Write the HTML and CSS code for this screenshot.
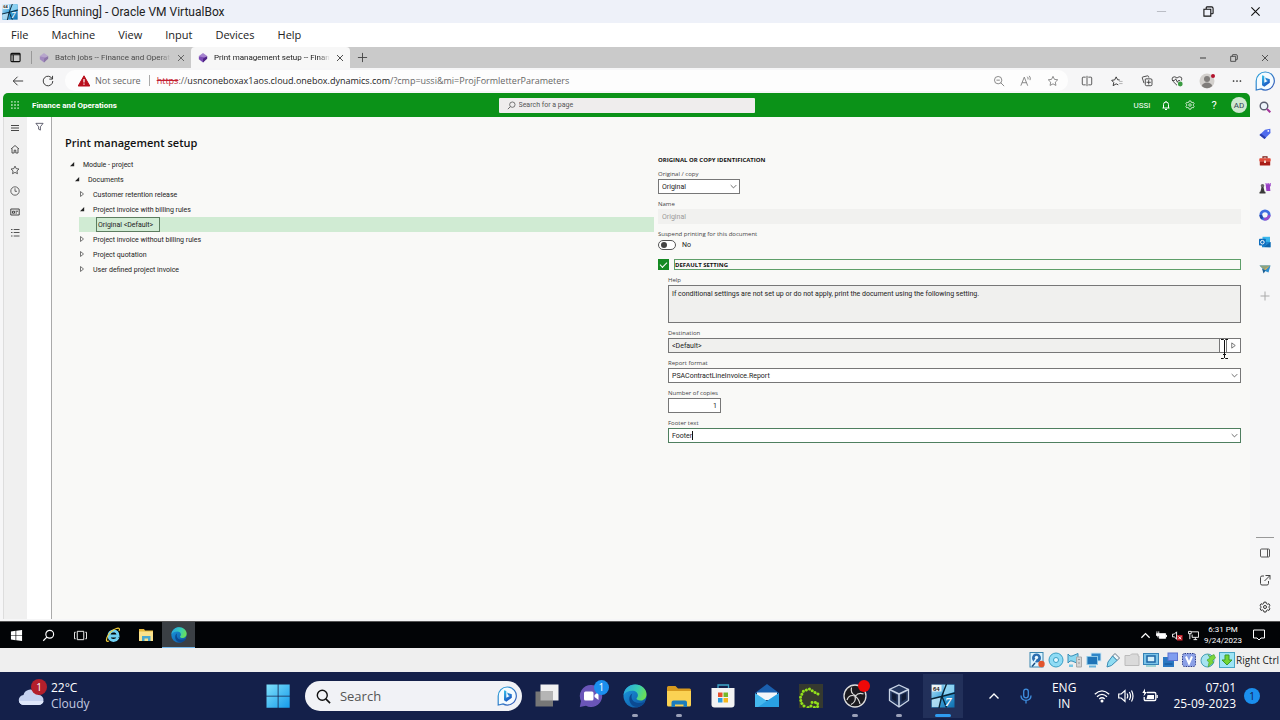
FILE: index.html
```html
<!DOCTYPE html>
<html lang="en">
<head>
<meta charset="utf-8">
<meta name="viewport" content="width=device-width, initial-scale=1">
<title>D365 [Running] - Oracle VM VirtualBox</title>
<link rel="stylesheet" href="styles.css">
</head>
<body>
<svg class="defs" aria-hidden="true">
  <defs>
    <linearGradient id="g-bing" x1="0" y1="0" x2="0.6" y2="1"><stop offset="0" stop-color="#38c3ea"/><stop offset="1" stop-color="#174fc0"/></linearGradient>
    <linearGradient id="g-ring" x1="0" y1="0" x2="1" y2="1"><stop offset="0" stop-color="#2aa5dd"/><stop offset="1" stop-color="#3a57b5"/></linearGradient>
    <linearGradient id="g-edge-top" x1="0" y1="0.3" x2="1" y2="0.6"><stop offset="0" stop-color="#2ba7e0"/><stop offset="0.55" stop-color="#38cdb4"/><stop offset="1" stop-color="#6fe04f"/></linearGradient>
    <linearGradient id="g-edge-low" x1="0" y1="0" x2="1" y2="1"><stop offset="0" stop-color="#1b9de2"/><stop offset="1" stop-color="#0d4f9e"/></linearGradient>
    <linearGradient id="g-win" x1="0" y1="0" x2="1" y2="1"><stop offset="0" stop-color="#7fe0fb"/><stop offset="1" stop-color="#159bea"/></linearGradient>
    <linearGradient id="g-glass" x1="0" y1="0" x2="1" y2="1"><stop offset="0" stop-color="#bfe6f8"/><stop offset="0.5" stop-color="#3da4dc"/><stop offset="1" stop-color="#0f6fae"/></linearGradient>
    <symbol id="i-close" viewBox="0 0 12 12"><path d="M1.5 1.5l9 9M10.5 1.5l-9 9" fill="none" stroke="currentColor" stroke-width="1.2"/></symbol>
    <symbol id="i-search" viewBox="0 0 16 16"><circle cx="9.5" cy="6.5" r="4.8" fill="none" stroke="currentColor" stroke-width="1.4"/><path d="M6 10L1.5 14.5" stroke="currentColor" stroke-width="1.5"/></symbol>
    <symbol id="i-restore" viewBox="0 0 12 12"><path d="M1 3.5h7.5V11H1zM3.5 3.5V1.8q0-.8.8-.8h5q1.7 0 1.7 1.7v5q0 .8-.8.8H8.5" fill="none" stroke="currentColor" stroke-width="1.2"/></symbol>
    <symbol id="i-chev" viewBox="0 0 10 10"><path d="M1 3l4 4 4-4" fill="none" stroke="currentColor" stroke-width="1.1"/></symbol>
    <symbol id="i-chev-up" viewBox="0 0 12 12"><path d="M1.5 8.5L6 4l4.5 4.5" fill="none" stroke="currentColor" stroke-width="1.4"/></symbol>
    <symbol id="i-open" viewBox="0 0 8 8"><path d="M6.2 2v4.2H2z" fill="#222"/></symbol>
    <symbol id="i-shut" viewBox="0 0 8 8"><path d="M2.500 1.500L5.500 4 2.500 6.500z" fill="none" stroke="#666" stroke-width=".9"/></symbol>
    <symbol id="i-star" viewBox="0 0 16 16"><path d="M8 1.800l1.900 4 4.400.6-3.200 3.100.8 4.400L8 11.800l-3.900 2.100.8-4.400L1.700 6.400l4.400-.6z" fill="none" stroke="currentColor" stroke-width="1.100"/></symbol>
    <symbol id="i-gear" viewBox="0 0 16 16"><path d="M6.600 1.500h2.800l.5 2 1.400.8 2-.6 1.400 2.400-1.500 1.400v1.200l1.500 1.400-1.400 2.400-2-.6-1.400.8-.5 2H6.600l-.5-2-1.400-.8-2 .6-1.400-2.400 1.500-1.400V7.500L1.300 6.100l1.400-2.400 2 .6 1.400-.8z" fill="none" stroke="currentColor" stroke-width="1.200"/><circle cx="8" cy="8" r="2" fill="none" stroke="currentColor" stroke-width="1.200"/></symbol>
    <symbol id="i-bing" viewBox="0 0 20 20"><path d="M10.300 1a9 9 0 1 1-4.300 16.900L1.200 19V10A9 9 0 0 1 10.300 1z" fill="#f4fbff" stroke="url(#g-ring)" stroke-width="1.200"/><path d="M7 4.200l2.300.9v6.700l3.500-1.700-1.700-.9-1.100-2.700 4.800 1.800v3.500L9.300 15.800 7 14.300z" fill="url(#g-bing)"/></symbol>
    <symbol id="i-edge" viewBox="0 0 24 24"><circle cx="12" cy="12" r="11.500" fill="url(#g-edge-low)"/><path d="M.6 11C1.500 4.500 6.500.5 12.300.5c6.500 0 11.200 4.800 11.200 9.700 0 4-2.900 6.300-6 6.300-2.700 0-4-1.200-4-2 0-.6 1.400-1.300 1.400-3.300 0-2.400-2.400-4.400-5.600-4.400C5.200 6.800 2 8.600.6 11z" fill="url(#g-edge-top)"/><path d="M9.300 9.500c-2 1.200-3 3.200-3 5.500 0 4 3.300 8.400 8.700 8 3-.7 5.200-2.300 6.700-4.300.5-.7 0-1-.6-.7-4.600 2.400-11.800.6-12.500-4.300-.2-1.600.1-3 .7-4.200z" fill="#0b4a92"/></symbol>
    <symbol id="i-dyn" viewBox="0 0 12 12"><path d="M6 0l5 3.500L6 7 1 3.500z" fill="#a583cf"/><path d="M6 5l5 0-5 6.500L1 7.500V4z" fill="#7b4bb5"/><path d="M6 7l5-3.500V7l-5 4.500z" fill="#4f2485"/></symbol>
    <symbol id="i-vm" viewBox="0 0 24 24"><rect x=".5" y=".5" width="23" height="23" fill="url(#g-glass)"/><path d="M1 15l9-2-1 10H1z" fill="#d5f0fb" opacity=".7"/><path d="M13 1h10v7l-10 3z" fill="#9edcf6" opacity=".8"/><path d="M15.500 0L10.500 13 8 24M0 15l10.500-2.500L24 9M11 12.500l4.500 11" stroke="#0a2436" stroke-width="1.400" fill="none"/><rect x="1" y="1" width="9.500" height="6.500" fill="#eef4f6"/><text x="2" y="6.500" font-size="6" font-weight="700" fill="#222" font-family="Liberation Sans">64</text><text x="14" y="21.500" font-size="13" font-style="italic" font-weight="700" fill="#fff" font-family="Liberation Serif">7</text></symbol>
    <symbol id="i-folder" viewBox="0 0 24 24"><path d="M0 3.500Q0 2 1.500 2H8.500l2.500 2.500H22.500q1.500 0 1.500 1.500v3H0z" fill="#d79a1f"/><path d="M0 7h24v14q0 1.500-1.500 1.500H1.500Q0 22.500 0 21z" fill="#fbd253"/><path d="M4.500 23v-4.500q0-2 2-2h11.500q2 0 2 2v4.500h-3.500v-2.500h-8.500V23z" fill="#1d7dbd"/></symbol>
  </defs>
</svg>

<div class="screen">
  <header class="titlebar">
    <svg class="vm-icon"><use href="#i-vm"/></svg>
    <h1>D365 [Running] - Oracle VM VirtualBox</h1>
    <div class="win-ctl">
      <button class="dim" aria-label="Minimize"><svg viewBox="0 0 12 12"><path d="M1 6h10" stroke="currentColor"/></svg></button>
      <button aria-label="Restore"><svg><use href="#i-restore"/></svg></button>
      <button aria-label="Close"><svg><use href="#i-close"/></svg></button>
    </div>
  </header>
  <nav class="menubar">
    <button>File</button><button>Machine</button><button>View</button><button>Input</button><button>Devices</button><button>Help</button>
  </nav>

  <section class="guest">
    <div class="tabstrip">
      <button class="tab-menu" aria-label="Tab actions"><svg viewBox="0 0 12 12"><rect x="1" y="1.500" width="10" height="9" rx="1" fill="none" stroke="#111" stroke-width="1.200"/><path d="M1 3h10M3.500 3v8" stroke="#111" stroke-width="1.200"/></svg></button>
      <div class="tab">
        <svg class="fav"><use href="#i-dyn"/></svg><span>Batch jobs -- Finance and Operat</span><button aria-label="Close tab"><svg><use href="#i-close"/></svg></button>
      </div>
      <div class="tab active">
        <svg class="fav"><use href="#i-dyn"/></svg><span>Print management setup -- Finan</span><button aria-label="Close tab"><svg><use href="#i-close"/></svg></button>
      </div>
      <button class="new-tab" aria-label="New tab"><svg viewBox="0 0 12 12"><path d="M6 1v10M1 6h10" stroke="#444"/></svg></button>
      <div class="win-ctl small">
        <button aria-label="Minimize"><svg viewBox="0 0 12 12"><path d="M1.500 6h9" stroke="currentColor" stroke-width="1.400"/></svg></button>
        <button aria-label="Restore"><svg><use href="#i-restore"/></svg></button>
        <button aria-label="Close"><svg><use href="#i-close"/></svg></button>
      </div>
    </div>

    <div class="browser">
      <div class="viewport">
        <div class="toolbar">
          <button aria-label="Back"><svg viewBox="0 0 14 14"><path d="M13 7H1.500M6.500 2l-5 5 5 5" fill="none" stroke="#333" stroke-width="1.100"/></svg></button>
          <button aria-label="Refresh"><svg viewBox="0 0 14 14"><path d="M12 4.500A5.600 5.600 0 1 0 12.600 7M12.300 1v3.800H8.500" fill="none" stroke="#333" stroke-width="1.100"/></svg></button>
          <div class="address">
            <svg class="warn" viewBox="0 0 12 12"><path d="M6 .8L11.800 11H.2z" fill="#b90f1c" stroke="#b90f1c" stroke-linejoin="round"/><path d="M6 4v3.500M6 8.500v1.300" stroke="#fff" stroke-width="1.200"/></svg>
            <span class="insecure">Not secure</span>
            <a class="url" href="#"><s>https</s><i>://</i>usnconeboxax1aos.cloud.onebox.dynamics.com<i>/?cmp=ussi&amp;mi=ProjFormletterParameters</i></a>
            <button aria-label="Zoom out"><svg viewBox="0 0 14 14"><circle cx="6" cy="6" r="4.300" fill="none" stroke="#777"/><path d="M9 9l4 4M4 6h4" stroke="#777"/></svg></button>
            <button aria-label="Read aloud"><svg viewBox="0 0 14 14"><path d="M1 12.500L5 2.500l4 10M2.500 9h5M8.500 2q1.500 1.300.8 3.200M10.800 1q2 2.300.9 5" fill="none" stroke="#777"/></svg></button>
            <button class="grey" aria-label="Add to favorites"><svg><use href="#i-star"/></svg></button>
          </div>
          <button aria-label="Split screen"><svg viewBox="0 0 14 14"><path d="M5.500 2.500H2.500q-1 0-1 1v7q0 1 1 1h3M8.500 2.500h3q1 0 1 1v7q0 1-1 1h-3M7 1v12" fill="none" stroke="#444"/></svg></button>
          <button aria-label="Favorites"><svg viewBox="0 0 14 14"><path d="M8.500 11.500L6 10.300 2.500 12.500 3.200 8.800.8 6.200l3.500-.5L6 2.200l1.700 3.300 2.500.4" fill="none" stroke="#333" stroke-width="1.100"/><path d="M9.500 7.500h4M9.500 10h4" stroke="#aaa"/></svg></button>
          <button aria-label="Collections"><svg viewBox="0 0 14 14"><path d="M3.500 9.500L1.500 3.500q-.3-1 .6-1.200L7.500 1q1-.2 1.300.7l.3 1.300M5.500 4.500h6q1.300 0 1.300 1.300v5.400q0 1.300-1.300 1.300h-5q-1.500 0-1.500-1.500V4.500M9 6v5M6.500 8.500h5" fill="none" stroke="#333"/></svg></button>
          <button aria-label="Browser essentials"><svg viewBox="0 0 14 14"><path d="M7 12L2 7Q.5 4.500 2 2.700 4.500 1 7 3.500 9.500 1 12 2.700 13.300 4.500 12 6.500M1.500 6.500H4l1.500-2 2 4L8.500 6.500h2" fill="none" stroke="#333"/><circle cx="10.800" cy="10.500" r="2.800" fill="#3a9a42"/></svg></button>
          <button aria-label="Profile"><svg class="big" viewBox="0 0 16 16"><circle cx="8" cy="8" r="7.500" fill="#d3d0cd"/><circle cx="8" cy="6" r="3" fill="#807d7b"/><path d="M2.700 13Q4 9.500 8 9.500t5.300 3.500Q8 17.500 2.700 13z" fill="#807d7b"/><circle cx="14" cy="3" r="2" fill="#b3122c"/></svg></button>
          <button aria-label="Settings and more"><svg viewBox="0 0 14 14"><circle cx="3" cy="7" r="1" fill="#222"/><circle cx="7" cy="7" r="1" fill="#222"/><circle cx="11" cy="7" r="1" fill="#222"/></svg></button>
        </div>

        <div class="app">
          <header class="appbar">
            <div class="brand">
              <button aria-label="App launcher"><svg viewBox="0 0 9 9" fill="#e4f6e4"><path d="M.2.2h1.600v1.600H.2zM3.700.2h1.600v1.600H3.700zM7.200.2h1.600v1.600H7.200zM.2 3.700h1.600v1.600H.2zM3.700 3.700h1.600v1.600H3.700zM7.200 3.700h1.600v1.600H7.200zM.2 7.200h1.600v1.600H.2zM3.700 7.200h1.600v1.600H3.700zM7.200 7.200h1.600v1.600H7.200z"/></svg></button>
              <strong>Finance and Operations</strong>
            </div>
            <label class="find"><svg><use href="#i-search"/></svg><input type="search" placeholder="Search for a page" aria-label="Search for a page"></label>
            <div class="app-tools">
              <button>USSI</button>
              <button aria-label="Notifications"><svg viewBox="0 0 10 10"><path d="M1.500 8h7M2.500 8V4.500Q2.500 2 5 2t2.500 2.500V8M4 9.500h2M5 1v1" fill="none" stroke="#fff"/></svg></button>
              <button aria-label="Settings"><svg><use href="#i-gear"/></svg></button>
              <button class="help" aria-label="Help">?</button>
              <button class="avatar">AD</button>
            </div>
          </header>
          <div class="app-body">
            <nav class="rail">
              <button aria-label="Expand"><svg viewBox="0 0 10 10"><path d="M1 2.500h8M1 5h8M1 7.500h8" stroke="#333" stroke-width=".9"/></svg></button>
              <button aria-label="Home"><svg viewBox="0 0 10 10"><path d="M1 5l4-3.500L9 5M2 4.500V9h2.200V6.200h1.600V9H8V4.500" fill="none" stroke="#444" stroke-width=".9"/></svg></button>
              <button aria-label="Favorites"><svg><use href="#i-star"/></svg></button>
              <button aria-label="Recent"><svg viewBox="0 0 10 10"><circle cx="5" cy="5" r="4.200" fill="none" stroke="#444" stroke-width=".8"/><path d="M5 2.300V5.300h2" fill="none" stroke="#444" stroke-width=".8"/></svg></button>
              <button aria-label="Workspaces"><svg viewBox="0 0 10 10"><path d="M.8 2h8.400v6H.8z" fill="none" stroke="#444"/><path d="M2.500 4.200h2v2h-2zM5.500 4.200h2.500M5.500 6H7" fill="none" stroke="#333" stroke-width=".9"/></svg></button>
              <button aria-label="Modules"><svg viewBox="0 0 10 10"><path d="M1 1.500h1.500M1 4.500h1.500M1 8h1.500M3.700 1.500H9.500M3.700 4.500H9.500M3.700 8H9.500" stroke="#555" stroke-width="1"/></svg></button>
            </nav>
            <aside class="filter"><button aria-label="Show filters"><svg viewBox="0 0 10 10"><path d="M1 1.500h8L6 5.300V9L4 8V5.300z" fill="none" stroke="#445" stroke-width=".9"/></svg></button></aside>
            <main class="page">
              <section class="tree-col">
                <h2>Print management setup</h2>
                <ul class="tree" role="tree">
                  <li role="treeitem"><div class="node l1"><svg><use href="#i-open"/></svg>Module - project</div></li>
                  <li role="treeitem"><div class="node l2"><svg><use href="#i-open"/></svg>Documents</div></li>
                  <li role="treeitem"><div class="node l3"><svg><use href="#i-shut"/></svg>Customer retention release</div></li>
                  <li role="treeitem"><div class="node l3"><svg><use href="#i-open"/></svg>Project invoice with billing rules</div></li>
                  <li role="treeitem" aria-selected="true"><div class="node l4"><span>Original &lt;Default&gt;</span></div></li>
                  <li role="treeitem"><div class="node l3"><svg><use href="#i-shut"/></svg>Project invoice without billing rules</div></li>
                  <li role="treeitem"><div class="node l3"><svg><use href="#i-shut"/></svg>Project quotation</div></li>
                  <li role="treeitem"><div class="node l3"><svg><use href="#i-shut"/></svg>User defined project invoice</div></li>
                </ul>
              </section>
              <form class="form-col">
                <h3>ORIGINAL OR COPY IDENTIFICATION</h3>
                <div class="field narrow"><label for="kind">Original / copy</label><div class="box"><select id="kind"><option>Original</option></select><svg><use href="#i-chev"/></svg></div></div>
                <div class="field"><label for="name">Name</label><div class="box off"><input id="name" type="text" value="Original" disabled></div></div>
                <div class="field"><label for="suspend">Suspend printing for this document</label><div class="switch"><input id="suspend" type="checkbox" role="switch"><span>No</span></div></div>
                <div class="section-check"><input id="default" type="checkbox" checked><label for="default">DEFAULT SETTING</label></div>
                <div class="nested">
                  <div class="field"><label for="help">Help</label><textarea id="help" readonly>If conditional settings are not set up or do not apply, print the document using the following setting.</textarea></div>
                  <div class="field"><label for="dest">Destination</label>
                    <div class="box read"><input id="dest" type="text" value="&lt;Default&gt;" readonly><button class="slot" type="button" aria-label="Lookup"></button><button class="go" type="button" aria-label="Open menu"><svg viewBox="0 0 8 8"><path d="M2 1l4 3-4 3z" fill="none" stroke="#555" stroke-width=".9"/></svg></button>
                      <svg class="ibeam" viewBox="0 0 9 22"><path d="M1 1.500h2.500l1 1 1-1H8M1 20.500h2.500l1-1 1 1H8M4.500 2v18M3 16.500h3" fill="none" stroke="#111"/></svg>
                    </div>
                  </div>
                  <div class="field"><label for="report">Report format</label><div class="box"><select id="report"><option>PSAContractLineInvoice.Report</option></select><svg><use href="#i-chev"/></svg></div></div>
                  <div class="field copies"><label for="copies">Number of copies</label><div class="box"><input id="copies" type="text" inputmode="numeric" value="1"></div></div>
                  <div class="field"><label for="footer">Footer text</label><div class="box focus"><input id="footer" type="text" value="Footer"><span class="caret"></span><svg><use href="#i-chev"/></svg></div></div>
                </div>
              </form>
            </main>
          </div>
        </div>
      </div>

      <aside class="edgebar">
        <button class="bing" aria-label="Bing chat"><svg><use href="#i-bing"/></svg></button>
        <button aria-label="Search"><svg viewBox="0 0 12 12"><circle cx="5" cy="5" r="3.800" fill="#eef5fb" stroke="#5b5f70" stroke-width="1.400"/><path d="M8 8l3.300 3.300" stroke="#a5359a" stroke-width="2"/></svg></button>
        <button aria-label="Shopping"><svg viewBox="0 0 12 12"><path d="M.5 7L6 1.800 11.300.8 11.500 5 5.500 11z" fill="#4f6bed"/><path d="M.5 7L2 5.600l5 4-1.500 1.400z" fill="#2c3fae"/><circle cx="9.300" cy="2.900" r=".9" fill="#fff"/></svg></button>
        <button aria-label="Tools"><svg viewBox="0 0 12 12"><path d="M4 3.500V1.800h4v1.700" fill="none" stroke="#7c1d16" stroke-width="1.200"/><rect x=".3" y="3.300" width="11.400" height="3.500" rx=".8" fill="#e04a3a"/><rect x=".8" y="6.500" width="10.400" height="4" rx=".5" fill="#a91d17"/><path d="M5 5.500h2V8H5z" fill="#f3d6c8"/></svg></button>
        <button aria-label="Games"><svg viewBox="0 0 12 12"><path d="M6.500 1h1v1.300h1V1h1.200v1.300h1V1h1v3l-.8.800.5 4.200h-4z" fill="#9a3fc6"/><circle cx="3.500" cy="3.800" r="1.800" fill="#666"/><path d="M2.500 5h2l1 4.500 1 .5v1.500h-6V10l1-.5z" fill="#3a3a3a"/></svg></button>
        <button aria-label="Microsoft 365"><svg viewBox="0 0 12 12"><circle cx="6" cy="6" r="4.200" fill="none" stroke="#3f6ee0" stroke-width="2.800"/><path d="M10.200 6A4.200 4.200 0 0 1 5 10" fill="none" stroke="#9a4bcc" stroke-width="2.800"/><path d="M3.500 9.400A4.200 4.200 0 0 1 1.800 6" fill="none" stroke="#2348a8" stroke-width="2.800"/></svg></button>
        <button aria-label="Outlook"><svg viewBox="0 0 12 12"><rect x="3.500" y=".8" width="7.500" height="6" fill="#39b6ec"/><path d="M3 5.500l8.500.5v5.200H3z" fill="#1e86d0"/><path d="M11.500 6v5.200L5 11z" fill="#0f65ad"/><rect x="0" y="2.800" width="6.800" height="6.800" rx=".8" fill="#0d6cbd"/><circle cx="3.400" cy="6.200" r="1.800" fill="none" stroke="#fff" stroke-width="1"/></svg></button>
        <button aria-label="Drop"><svg viewBox="0 0 12 12"><path d="M.5 2.500h11L9.500 9.500 6 8z" fill="#2f8fd0"/><path d="M.5 2.500h11L5 6.500z" fill="#8fa37c"/><path d="M3 5.500l1.500 5 2.200-3z" fill="#1b5e93"/><path d="M5 6.200l6-3.500L6.500 7z" fill="#efb14a"/></svg></button>
        <button aria-label="Customize"><svg viewBox="0 0 12 12"><path d="M6 1.500v9M1.500 6h9" stroke="#aaa"/></svg></button>
        <div class="edge-foot">
          <button aria-label="Hide sidebar"><svg viewBox="0 0 12 12"><rect x="1.500" y="2" width="9" height="8" rx="1" fill="none" stroke="#555"/><path d="M8.500 2v8" stroke="#555"/></svg></button>
          <button aria-label="Open in window"><svg viewBox="0 0 12 12"><path d="M5 2H3Q1.500 2 1.500 3.500v6Q1.500 11 3 11h5q1.500 0 1.500-1.500V7M6.500 1.500H11v4M11 1.500L5.500 7" fill="none" stroke="#444"/></svg></button>
          <button aria-label="Settings"><svg><use href="#i-gear"/></svg></button>
        </div>
      </aside>
    </div>
  </section>

  <footer class="guestbar">
    <div class="apps">
      <button aria-label="Start"><svg viewBox="0 0 14 14"><path d="M1 2.700l5-.7v4.700H1zM6.700 1.900L13 1v5.700H6.700zM1 7.400h5v4.700l-5-.7zM6.700 7.400H13V13l-6.300-.9z" fill="#fff"/></svg></button>
      <button aria-label="Search"><svg><use href="#i-search"/></svg></button>
      <button aria-label="Task view"><svg viewBox="0 0 14 14"><path d="M3.500 2.500h7v9h-7zM1.800 3.500H.5v7h1.300M12.200 3.500h1.300v7h-1.300" fill="none" stroke="#fff"/></svg></button>
      <button class="color" aria-label="Internet Explorer"><svg viewBox="0 0 16 16"><path d="M13 10.700Q11.500 13.500 8.500 13.500 4 13 4 8.700t4.500-4.900q4.500.2 4.600 5.200H5" fill="none" stroke="#6fd0f3" stroke-width="2.800"/><path d="M14 4Q15.500.5 12 1.300 5 3.500 2 10.500.3 15.500 4 14" fill="none" stroke="#f2cf3a" stroke-width="1.200"/></svg></button>
      <button class="color" aria-label="File Explorer"><svg viewBox="0 0 16 16"><path d="M1 2h5l1 1.500h8V14H1z" fill="#e8b93c"/><path d="M1 4.500h14V14H1z" fill="#fbe28b"/><path d="M4 14V9h8.500v5h-2.500v-2.500H6.500V14z" fill="#4aa8cf"/></svg></button>
      <button class="color on" aria-label="Edge"><svg><use href="#i-edge"/></svg></button>
    </div>
    <div class="tray">
      <svg><use href="#i-chev-up"/></svg>
      <svg viewBox="0 0 12 12"><path d="M3.500 4h7v5h-7z" fill="#fff" stroke="#fff"/><path d="M11 5.500h1v2h-1z" fill="#fff"/><path d="M1 1.500v2.500M3 1.500v2.500M.5 4h3v2h-3zM2 6v2" stroke="#fff" fill="#fff"/></svg>
      <svg viewBox="0 0 12 12"><path d="M.5 4.500H2.500L5 2v8L2.500 7.500h-2z" fill="none" stroke="#fff"/><rect x="5.500" y="5.500" width="6" height="6" fill="#c9202a"/><path d="M7 7l3 3M10 7l-3 3" stroke="#fff"/></svg>
      <svg viewBox="0 0 12 12"><path d="M3.500 2h8v6h-7V5M6 10.500h4M8 8v2.500M.5 1.500h3v2.500h-3zM2 4v6" fill="none" stroke="#fff"/></svg>
      <time>6:31 PM<br>9/24/2023</time>
      <svg class="note" viewBox="0 0 14 14"><path d="M1.500 2h11v8H9l-2 2-2-2H1.500z" fill="none" stroke="#fff"/></svg>
    </div>
  </footer>

  <div class="vmstatus">
    <svg viewBox="0 0 16 16"><rect x="1" y=".5" width="13" height="14.500" fill="#d9f3ff" stroke="#3a86b0"/><circle cx="7.500" cy="6" r="4.500" fill="#2b6eb0"/><circle cx="7.500" cy="5.500" r="1.700" fill="#eaf9ff"/><path d="M3 13l4-6" stroke="#eaf9ff" stroke-width="1.500"/><path d="M3 14.500l3-3.500" stroke="#1c4d80" stroke-width="1.500"/><circle cx="12.500" cy="12" r="3.200" fill="#e2552c"/></svg>
    <svg viewBox="0 0 16 16"><circle cx="8" cy="8" r="7" fill="#8fdcf5" stroke="#3a9fc5"/><circle cx="8" cy="8" r="2.500" fill="#e6f8ff" stroke="#3a9fc5"/></svg>
    <svg viewBox="0 0 16 16"><path d="M1 2l2 2h2l6-2.500v10L5 9H3l-2 2z" fill="#8ad8f0" stroke="#3a8db5"/><path d="M2 12.500h4V15H2z" fill="#79c6e3"/><path d="M9.500 5h5v10h-5z" fill="#d4d4d4" stroke="#aaa"/><path d="M11 7.500h2M11 11h2" stroke="#999"/></svg>
    <svg viewBox="0 0 16 16"><rect x="5" y="1" width="10" height="8" fill="#2e86c8" stroke="#d0e8f4"/><rect x="1" y="4.500" width="10.500" height="8" fill="#1f74b8" stroke="#8cc7e6"/><path d="M3 14.500h7" stroke="#67b3db" stroke-width="2"/></svg>
    <svg viewBox="0 0 16 16"><path d="M10 1.500L14.500 6 12 8.500 7.500 4z" fill="#eef5f8" stroke="#678"/><path d="M7.500 4L12 8.500 6.500 13.500 2 15l1-5z" fill="#8fdcf2" stroke="#3a8db5"/></svg>
    <svg viewBox="0 0 16 16"><path d="M1 13.500V3.500h5l1.500-1.500H14v2h1v9.500z" fill="#dadada" stroke="#bbb"/></svg>
    <svg viewBox="0 0 16 16"><rect x=".5" y="1.500" width="15" height="11" fill="#7cc4e8" stroke="#3583b8"/><rect x="4" y="4" width="8" height="6" fill="#d4f0fb" stroke="#1c66a5" stroke-width="1.500"/><path d="M3 14h10" stroke="#8cc" stroke-width="1.500"/></svg>
    <svg viewBox="0 0 16 16"><rect x="1" y="5" width="11" height="10" fill="#2b78c2"/><rect x="6" y="1" width="9.500" height="7.500" fill="#7f9df0" stroke="#5d72cf"/><path d="M2.500 12h8" stroke="#164f91"/></svg>
    <svg viewBox="0 0 16 16"><rect x="1.500" y="1.500" width="13" height="13" rx="2" fill="#8ba0e6" stroke="#2d3c8a" stroke-dasharray="1.500 1"/><path d="M5 4.500l3 7 3-7" fill="none" stroke="#fff" stroke-width="2"/></svg>
    <svg viewBox="0 0 16 16"><circle cx="7.500" cy="8.500" r="6.500" fill="#a6e3f0" stroke="#48a0b8"/><path d="M8 2.500l2 2 4-2 1.500 3.500-3 2.500 1 2-5.500 4.500 1-4.500-2-2.500 3-2z" fill="#7bd63c" stroke="#3f9a2e" stroke-width=".6"/></svg>
    <svg viewBox="0 0 16 16"><rect x=".5" y=".5" width="15" height="15" fill="#9fe4f4" stroke="#4aa5c5"/><path d="M6 3h4v5h3l-5 5-5-5h3z" fill="#72d431" stroke="#3d9a2a"/></svg>
    <span>Right Ctrl</span>
  </div>

  <footer class="hostbar">
    <button class="weather">
      <span class="cloud"><svg viewBox="0 0 26 20"><path d="M6 19a5 5 0 0 1-.5-10A7 7 0 0 1 18 6.500 5.500 5.500 0 0 1 20.500 9 5 5 0 0 1 20.500 19z" fill="#c6d2f0"/><path d="M1 15a5 4 0 0 0 5 4h14.500a5 4 0 0 0 5-4z" fill="#dfe7fa"/></svg><b>1</b></span>
      <span class="w-text">22°C<br><em>Cloudy</em></span>
    </button>
    <div class="dock">
      <button aria-label="Start"><svg viewBox="0 0 24 24"><path d="M.5.5h11.200v11.200H.5zM12.500.5h11.200v11.200H12.500zM.5 12.500h11.200v11.200H.5zM12.500 12.500h11.200v11.200H12.500z" fill="url(#g-win)"/></svg></button>
      <label class="pill"><svg viewBox="0 0 16 16"><circle cx="6.700" cy="6.700" r="5.300" fill="none" stroke="#111" stroke-width="1.500"/><path d="M10.500 10.500L15 15" stroke="#111" stroke-width="1.700"/></svg><input type="search" placeholder="Search" aria-label="Search"><svg class="bing-s"><use href="#i-bing"/></svg></label>
      <button aria-label="Task view"><svg viewBox="0 0 24 24"><path d="M5.500.5h18v16h-18z" fill="#f1f1f1"/><path d="M.5 7.500h17.500v15H.5z" fill="#777"/><path d="M5.500 7.500H18v9H5.500z" fill="#b5b5b5"/></svg></button>
      <button aria-label="Chat"><svg viewBox="0 0 24 24"><path d="M12 1a11 11 0 1 1-5 20.700L.8 23 2 17A11 11 0 0 1 12 1z" fill="#6a55b8"/><rect x="5" y="7.500" width="9.500" height="9" rx="1.500" fill="#fff"/><path d="M15.500 11l4-3v8l-4-3z" fill="#fff"/></svg><b class="count">1</b></button>
      <button class="run" aria-label="Edge"><svg><use href="#i-edge"/></svg></button>
      <button class="run" aria-label="File Explorer"><svg><use href="#i-folder"/></svg></button>
      <button aria-label="Store"><svg viewBox="0 0 24 24"><path d="M7 4.500V1h10.500v3.500" fill="none" stroke="#3fa7c9" stroke-width="1.300"/><path d="M.5 4h23v16.500q0 3-3 3h-17q-3 0-3-3z" fill="#f3f3f3"/><path d="M7 8.500h4.500V13H7z" fill="#e8502d"/><path d="M12.500 8.500H17V13h-4.500z" fill="#76b82a"/><path d="M7 14h4.500v4.500H7z" fill="#2a9de0"/><path d="M12.500 14H17v4.500h-4.500z" fill="#f6b81c"/></svg></button>
      <button aria-label="Mail"><svg viewBox="0 0 24 24"><path d="M0 9L12 0l12 9z" fill="#1a5fae"/><path d="M2 8.500h20V16H2z" fill="#f4f6f9"/><path d="M0 9l12 8 12-8V23H0z" fill="#45b8ee"/><path d="M24 9V23H3z" fill="#1e96dd" opacity=".7"/></svg></button>
      <button aria-label="Greenshot"><svg viewBox="0 0 24 24"><rect width="24" height="24" fill="#35392f"/><path d="M19 10l-4-2-4.500-3-6 2-3 6 .5 5.500 3.500 4M9 23.500l3-1.500M13 18.500h5.500l.5 4-4 1" fill="none" stroke="#93e01c" stroke-width="2.900" stroke-dasharray="0.100 3.200" stroke-linecap="round"/></svg></button>
      <button class="run" aria-label="OBS Studio"><svg viewBox="0 0 24 24"><circle cx="12" cy="12" r="11" fill="#1b1a1f" stroke="#ddd" stroke-width="1.300"/><path d="M8.500 3.500q-1.500 6 4 8M20.500 10q-5-2-8 2M12 12q1.500 6-4 8.500M12 12Q6 10 4 16M12 12q4 3 5 8" fill="none" stroke="#ddd" stroke-width="1.200"/></svg><b class="rec"></b></button>
      <button class="run" aria-label="VirtualBox"><svg viewBox="0 0 24 24"><path d="M12 1l9.500 4.500v11L12 23l-9.500-6.500v-11z" fill="#22345c" stroke="#c9d4e6" stroke-width="1.300"/><path d="M2.500 5.500L12 10l9.500-4.500M12 10v13" fill="none" stroke="#c9d4e6" stroke-width="1.600"/><path d="M5 9l4.500 2v7L5 15zM19 9l-4.500 2v7l4.500-3z" fill="#0f1a35"/></svg></button>
      <button class="run current" aria-label="D365"><svg><use href="#i-vm"/></svg></button>
    </div>
    <div class="systray">
      <svg class="up"><use href="#i-chev-up"/></svg>
      <svg class="mic" viewBox="0 0 16 16"><path d="M8 1.200q2.300 0 2.300 2.300v4Q10.300 9.800 8 9.800T5.700 7.500v-4Q5.700 1.200 8 1.200zM3 7.500Q3 12.300 8 12.300t5-4.800M8 12.300V15.500" fill="none" stroke="#3f8fe0" stroke-width="1.300"/></svg>
      <span class="lang">ENG<br>IN</span>
      <svg viewBox="0 0 16 16"><path d="M.8 6.300Q8-.5 15.200 6.300M3 8.700Q8 4 13 8.700M5.300 11Q8 8.500 10.700 11" fill="none" stroke="#fff" stroke-width="1.300"/><circle cx="8" cy="13" r="1.500" fill="#fff"/></svg>
      <svg viewBox="0 0 16 16"><path d="M.7 6h2.500L7 2.500v11L3.200 10H.7zM9 5.500q1.500 2.500 0 5M11.300 4q2.500 4 0 8M13.500 2.500q3 5.500 0 11" fill="none" stroke="#fff" stroke-width="1.200"/></svg>
      <svg viewBox="0 0 16 16"><path d="M5 4.500h7.500q1.300 0 1.300 1.300v5.400q0 1.300-1.300 1.300h-9q-1.300 0-1.300-1.300V9" fill="none" stroke="#fff" stroke-width="1.300"/><path d="M14.500 7h1.300v3h-1.300z" fill="#fff"/><path d="M4.500 11L5.500 7h6.500v4z" fill="#fff"/><path d="M3 .5L.3 5h2L1.500 8.500 5 4H3z" fill="#fff"/></svg>
      <time>07:01<br>25-09-2023</time>
      <b class="notice">1</b>
    </div>
  </footer>
</div>
</body>
</html>
```
FILE: styles.css
```css
:root { --ui: "Open Sans", "Noto Sans", sans-serif; --compact: Roboto, "Open Sans", sans-serif; }
* { box-sizing: border-box; }
body { margin: 0; font-family: var(--ui); color: #222; background: #14204a; }
button, input, select, textarea { font: inherit; color: inherit; margin: 0; padding: 0; border: 0; background: none; outline: 0; }
button { display: flex; align-items: center; justify-content: center; white-space: nowrap; }
svg { display: block; flex: none; }
ul, h1, h2, h3 { margin: 0; padding: 0; }
.defs { position: absolute; width: 0; height: 0; }

.screen { min-height: 100vh; display: flex; flex-direction: column; }

/* Host window frame */
.titlebar { display: flex; align-items: center; height: 23px; padding-left: 2px; background: #eef1f9; }
.titlebar h1 { flex: 1; margin-left: 3px; font-family: var(--compact); font-size: 12px; font-weight: 400; line-height: 16px; }
.vm-icon { width: 16px; height: 16px; }
.win-ctl { display: flex; padding-right: 1px; }
.win-ctl button { width: 47px; color: #111; }
.win-ctl svg { width: 11px; height: 11px; }
.win-ctl .dim { color: #b5b8bf; }
.win-ctl.small { margin-left: auto; padding: 0; }
.win-ctl.small button { width: 31px; color: #333; }
.win-ctl.small svg { width: 8px; height: 8px; }
.menubar { display: flex; gap: 23px; height: 24px; padding-left: 11px; padding-bottom: 1px; background: #fff; font-size: 11px; }

/* Guest browser */
.guest { flex: 1; display: flex; flex-direction: column; background: #f6f6f7; }
.tabstrip { display: flex; height: 21px; background: #cacaca; }
.tab-menu { width: 31px; }
.tab-menu svg, .new-tab svg { width: 11px; height: 11px; }
.tab { display: flex; align-items: center; gap: 6px; width: 160px; padding: 0 6px 0 7px; font-family: var(--compact); font-size: 8px; color: #4c4c4c; }
.new-tab { width: 24px; }
.tab:not(.active) { border-left: 1px solid #999; border-image: linear-gradient(transparent 20%, #999 20% 80%, transparent 80%) 1; }
.tab.active { width: 159px; background: #f7f7f7; color: #222; border-radius: 4px 4px 0 0; }
.tab span { flex: 1; white-space: nowrap; mask-image: linear-gradient(90deg, #000 90%, transparent); }
.tab svg { width: 8px; height: 8px; }
.tab .fav { width: 10px; height: 10px; }
.tab:not(.active) .fav { opacity: .5; }

.browser { flex: 1; display: flex; }
.viewport { flex: 1; min-width: 0; display: flex; flex-direction: column; padding: 0 0 2px 3px; }
.toolbar { display: flex; align-items: center; height: 25px; margin-right: -2px; }
.toolbar button { width: 30px; }
.toolbar svg { width: 12px; height: 12px; }
.toolbar .big { width: 16px; height: 16px; }
.address { flex: 1; display: flex; align-items: center; height: 21px; margin: 0 4px 0 2px; padding: 0 2px 0 13px; background: #fdfdfd; border-radius: 10px; font-size: 9px; }
.address button { width: 27px; }
.grey { color: #777; }
.insecure { margin-left: 5px; padding-right: 8px; color: #666; border-right: 1px solid #aaa; line-height: 11px; }
.url { flex: 1; margin-left: 7px; color: #222; text-decoration: none; }
.url s { color: #c32030; }
.url i { font-style: normal; color: #666; }

.edgebar { width: 30px; display: flex; flex-direction: column; align-items: center; padding-bottom: 1px; }
.edgebar button { width: 27px; height: 27px; }
.edgebar svg { width: 12px; height: 12px; }
.edgebar .bing { height: 25px; }
.edgebar .bing svg { width: 20px; height: 20px; }
.edge-foot { margin-top: auto; }
.edge-foot::before { content: ""; display: block; width: 18px; height: 1px; margin: 0 auto 1px; background: #999; }

/* Application */
.app { flex: 1; display: flex; flex-direction: column; background: #f9f9f7; border-radius: 5px 5px 0 0; overflow: hidden; }
.appbar { display: grid; grid-template-columns: 1fr 256px 1fr; align-items: center; height: 24px; background: #0b9218; color: #fff; font-family: var(--compact); font-size: 8px; }
.brand, .app-tools { display: flex; align-items: center; }
.brand button { width: 24px; margin-right: 5px; }
.brand svg { width: 8px; height: 8px; }
.find { display: flex; align-items: center; height: 15px; padding: 0 8px; gap: 3px; background: #efeded; color: #555; border-radius: 1px; font-size: 7px; }
.find svg { width: 9px; height: 9px; }
.find input { flex: 1; min-width: 0; }
.find input::placeholder { color: #555; opacity: 1; }
.app-tools { justify-content: flex-end; padding-right: 3px; }
.app-tools button { width: 24px; }
.app-tools svg { width: 10px; height: 10px; }
.app-tools .help { font-size: 11px; }
.app-tools .avatar { width: 16px; height: 16px; margin-left: 5px; border-radius: 50%; background: #cfe8d0; color: #345; }
.app-body { flex: 1; display: flex; }
.rail { width: 24px; background: #f0f0f0; border-left: 1px solid #ddd; }
.rail button { width: 21px; height: 21px; }
.rail svg { width: 10px; height: 10px; }
.filter { width: 25px; background: #fff; border-right: 1px solid #aaa; }
.filter button { width: 24px; height: 19px; }
.filter svg { width: 9px; height: 9px; }
.page { flex: 1; display: grid; grid-template-columns: minmax(0, 601fr) minmax(0, 582fr); gap: 4px; align-items: start; padding-right: 9px; padding-bottom: 10px; font-family: var(--compact); font-size: 7px; }
.tree-col { padding-top: 16px; }
.tree-col h2 { padding-left: 13px; margin-bottom: 4px; font-family: var(--ui); font-size: 11px; font-weight: 600; line-height: 20px; color: #111; }
.tree { list-style: none; margin-left: 27px; line-height: 14px; }
.node { display: flex; align-items: center; height: 15px; padding-top: 1px; }
.node svg { width: 8px; height: 8px; margin: 0 7px 2px 0; }
.l1 { margin-left: -11px; }
.l2 { margin-left: -6px; }
.l3 { margin-left: -1px; }
.l4 { padding: 0 0 0 17px; background: #d0ebd3; }
.l4 span { padding: 1px 6px 0 1px; line-height: 12px; border: 1px solid #5d7d60; }

.form-col { padding-top: 37px; display: flex; flex-direction: column; gap: 5px; }
.form-col h3 { padding-top: 2px; font-family: var(--ui); font-size: 6px; font-weight: 700; line-height: 8px; color: #111; }
.field label { display: block; font-family: var(--ui); font-size: 6px; line-height: 10px; color: #444; }
.narrow { width: 82px; }
.box { position: relative; display: flex; align-items: center; height: 15px; background: #fff; border: 1px solid #777; }
.box input, .box select { flex: 1; min-width: 0; width: 100%; height: 100%; padding: 0 3px; appearance: none; }
.box > svg { position: absolute; right: 2px; width: 7px; height: 7px; color: #444; pointer-events: none; }
.box.off { background: #f1f1ef; border-color: #f1f1ef; color: #999; }
.box.read { background: #f0f0ee; }
.box.focus { border-color: #4f7f5f; }
.switch { display: flex; align-items: center; height: 12px; margin-bottom: 3px; gap: 6px; }
.switch input { width: 18px; height: 10px; padding: 1px; appearance: none; border: 1px solid #555; border-radius: 5px; background: #fff; }
.switch input::after { content: ""; display: block; width: 6px; height: 6px; margin-left: 1px; border-radius: 50%; background: #444; }
.section-check { display: flex; align-items: center; height: 11px; gap: 5px; }
.section-check input { width: 11px; height: 11px; appearance: none; background: #158a22; }
.section-check input::after { content: ""; display: block; width: 6px; height: 3px; margin: 3px auto 0; border: solid #fff; border-width: 0 0 1px 1px; transform: rotate(-45deg); }
.section-check label { flex: 1; padding-top: 1px; font-family: var(--ui); font-size: 6px; line-height: 8px; font-weight: 700; color: #111; border: 1px solid #5f9f69; }
.nested { display: flex; flex-direction: column; gap: 5px; padding-left: 10px; }
.nested textarea { display: block; width: 100%; height: 38px; padding: 3px 3px 0; line-height: 10px; resize: none; background: #f0f0ee; border: 1px solid #777; }
.slot, .go { height: 13px; border-left: 1px solid #777; background: #fff; }
.slot { width: 7px; }
.go { width: 14px; }
.go svg { width: 7px; height: 7px; }
.box > .ibeam { right: 11px; top: -1px; width: 9px; height: 22px; }
.copies .box { width: 53px; }
.copies input { text-align: right; }
.caret { position: absolute; left: 23px; top: 2px; width: 1px; height: 9px; background: #111; }

/* Guest taskbar */
.guestbar { display: flex; justify-content: space-between; height: 27px; background: #020406; color: #fff; font-family: var(--compact); font-size: 8px; border-top: 1px solid #555; }
.apps, .tray { display: flex; align-items: center; }
.apps button { width: 32px; height: 26px; }
.apps svg { width: 13px; height: 13px; }
.apps .color { width: 33px; }
.apps .color svg { width: 16px; height: 16px; }
.apps .on { background: #3a3f44; border-bottom: 1px solid #76b9ed; }
.tray { gap: 5px; padding-right: 14px; }
.tray svg { width: 11px; height: 11px; }
.tray svg.note { width: 14px; height: 14px; margin-left: 5px; }
.tray time { text-align: center; line-height: 11px; }

/* Virtual machine status strip */
.vmstatus { display: flex; align-items: center; justify-content: flex-end; gap: 3px; height: 24px; padding-right: 1px; background: #efefef; font-size: 10px; }
.vmstatus svg { width: 16px; height: 16px; }
.vmstatus span { margin-left: -2px; }

/* Host taskbar */
.hostbar { display: flex; align-items: center; height: 48px; background: #14204a; color: #fff; font-size: 12px; }
.weather { flex: 1; justify-content: flex-start; gap: 7px; padding-left: 18px; line-height: 16px; text-align: left; }
.weather em { font-style: normal; color: #c3cae0; }
.cloud { position: relative; }
.cloud svg { width: 26px; height: 20px; }
.cloud b { position: absolute; left: 13px; top: -7px; width: 16px; border-radius: 8px; background: #b3202c; font-size: 10px; font-weight: 400; text-align: center; }
.dock { display: flex; align-items: center; }
.dock button { position: relative; width: 44px; height: 44px; }
.dock button svg { width: 24px; height: 24px; }
.pill { display: flex; align-items: center; width: 217px; height: 30px; margin: 0 3px 0 5px; padding: 0 5px 0 11px; gap: 9px; background: #f1f2f6; border-radius: 15px; color: #444; }
.pill svg { width: 15px; height: 15px; }
.pill .bing-s { width: 20px; height: 20px; }
.pill input { flex: 1; min-width: 0; font-size: 13px; }
.pill input::placeholder { color: #555; opacity: 1; }
.run::after { content: ""; position: absolute; bottom: 1px; left: 19px; width: 6px; height: 3px; border-radius: 2px; background: #9aa0b8; }
.current { background: linear-gradient(90deg, transparent 2px, #22305a 2px 42px, transparent 42px); }
.run.current::after { left: 14px; width: 16px; background: #2f9bf0; }
.count, .rec { position: absolute; right: 4px; top: 6px; width: 15px; height: 15px; border-radius: 50%; background: #1b8fee; font-size: 10px; font-weight: 400; line-height: 15px; }
.rec { right: 7px; width: 12px; height: 12px; background: #f00808; }
.systray { display: flex; align-items: center; gap: 8px; padding: 0 20px 0 23px; line-height: 16px; }
.systray svg { width: 16px; height: 16px; }
.systray .up { width: 12px; height: 12px; margin-right: 10px; }
.systray .mic { margin-right: 10px; }
.lang { margin-right: 10px; text-align: center; }
.systray time { margin-left: 7px; text-align: right; }
.notice { width: 16px; height: 16px; border-radius: 50%; background: #1b8fee; color: #14204a; font-size: 10px; font-weight: 400; text-align: center; }
```
